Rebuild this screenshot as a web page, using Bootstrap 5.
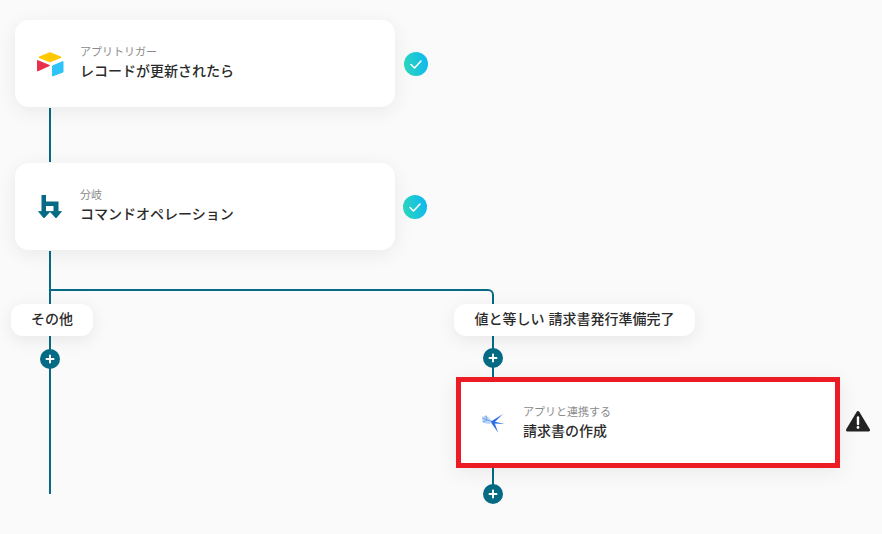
<!DOCTYPE html>
<html lang="ja">
<head>
    <meta charset="UTF-8">
    <meta name="viewport" content="width=device-width, initial-scale=1.0">
    <title>フロー</title>
    <link href="https://cdn.jsdelivr.net/npm/bootstrap@5.3.0/dist/css/bootstrap.min.css" rel="stylesheet">
    <style>
        html, body {
            margin: 0;
            height: 100%;
            overflow: hidden;
            background: #fafafa;
        }
        body {
            font-family: "Liberation Sans", "Noto Sans CJK JP", sans-serif;
            color: #2b2b2b;
        }
        .flow-stage {
            position: relative;
            width: 882px;
            height: 534px;
        }
        /* 接続線 */
        .flow-line {
            position: absolute;
            background: #056a84;
        }
        .flow-corner {
            position: absolute;
            left: 484px;
            top: 289px;
            width: 10px;
            height: 16px;
            border-top: 2px solid #056a84;
            border-right: 2px solid #056a84;
            border-top-right-radius: 6px;
        }
        /* ノード */
        .flow-node {
            position: absolute;
            height: 87px;
            background: #fff;
            border: 0;
            border-radius: 14px;
            box-shadow: 0 4px 20px rgba(0, 0, 0, .07);
        }
        .flow-node-alert {
            left: 456px;
            top: 377px;
            width: 384px;
            height: 91px;
            border: 5px solid #ed1c24;
            border-radius: 0;
        }
        .node-icon {
            width: 65px;
            flex: 0 0 65px;
            display: flex;
            justify-content: center;
            padding-left: 5px;
        }
        .flow-node-alert .node-icon {
            width: 62px;
            flex: 0 0 62px;
            padding-left: 2px;
        }
        .node-text {
            padding-bottom: 2px;
        }
        .flow-node-alert .node-text {
            padding-bottom: 0;
        }
        .node-label {
            font-size: 11px;
            line-height: 16px;
            color: #8a8a8a;
        }
        .node-title {
            font-size: 14px;
            line-height: 20px;
            margin-top: 1px;
            font-weight: 500;
            color: #2b2b2b;
        }
        /* 分岐ラベル */
        .flow-pill {
            position: absolute;
            top: 304px;
            height: 32px;
            background: #fff;
            border-radius: 12px;
            padding-bottom: 2px;
            font-size: 14px;
            font-weight: 500;
            box-shadow: 0 4px 18px rgba(0, 0, 0, .08);
        }
        /* 追加ボタン */
        .flow-plus {
            position: absolute;
            width: 20px;
            height: 20px;
            background: #056a84;
        }
        .flow-status {
            position: absolute;
        }
    </style>
</head>
<body>
    <div class="flow-stage">
        <!-- 接続線 -->
        <div class="flow-line" style="left:49px;top:108px;width:2px;height:54px"></div>
        <div class="flow-line" style="left:49px;top:251px;width:2px;height:243px"></div>
        <div class="flow-line" style="left:50px;top:289px;width:435px;height:2px"></div>
        <div class="flow-corner"></div>
        <div class="flow-line" style="left:492px;top:336px;width:2px;height:41px"></div>
        <div class="flow-line" style="left:492px;top:468px;width:2px;height:17px"></div>

        <!-- トリガー -->
        <div class="card flow-node d-flex flex-row align-items-center" style="left:15px;top:20px;width:380px">
            <div class="node-icon">
                <svg width="30" height="26" viewBox="0 0 30 26">
                    <path d="M15 2 25.500 6.300 15 10.500 4.500 6.300z" fill="#ffc800" stroke="#ffc800" stroke-width="1.500" stroke-linejoin="round"/>
                    <path d="M2.500 9.500 14.500 14.500 2.500 20z" fill="#e8304c" stroke="#e8304c" stroke-width="1" stroke-linejoin="round"/>
                    <path d="M17.500 15 28 10.500V21L17.500 25z" fill="#2fc3f8" stroke="#2fc3f8" stroke-width="1" stroke-linejoin="round"/>
                </svg>
            </div>
            <div class="node-text">
                <div class="node-label">アプリトリガー</div>
                <div class="node-title">レコードが更新されたら</div>
            </div>
        </div>
        <svg class="flow-status" style="left:404px;top:52px" width="24" height="24" viewBox="0 0 24 24">
            <defs>
                <linearGradient id="okGrad" x1="0" y1="0.600" x2="1" y2="0.400">
                    <stop offset="0" stop-color="#2bd6bb"/>
                    <stop offset="1" stop-color="#0fb8f0"/>
                </linearGradient>
            </defs>
            <circle cx="12" cy="12" r="12" fill="url(#okGrad)"/>
            <path d="M7 12.500l3.500 3.500 6.500-7" fill="none" stroke="#fff" stroke-width="1.600" stroke-linecap="round" stroke-linejoin="round"/>
        </svg>

        <!-- 分岐 -->
        <div class="card flow-node d-flex flex-row align-items-center" style="left:15px;top:163px;width:380px">
            <div class="node-icon">
                <svg width="24" height="25" viewBox="0 0 24 25">
                    <path d="M3.500 1h4.500v6.500h12.500v10h-5v-5.500H8v6H3.500z" fill="#056a84"/>
                    <path d="M.5 17.500h11.500l-6 6.500zM12 17.500h11.500l-5.500 6.500z" fill="#056a84" stroke="#056a84" stroke-width=".8" stroke-linejoin="round"/>
                </svg>
            </div>
            <div class="node-text">
                <div class="node-label">分岐</div>
                <div class="node-title">コマンドオペレーション</div>
            </div>
        </div>
        <svg class="flow-status" style="left:403px;top:195px" width="24" height="24" viewBox="0 0 24 24">
            <circle cx="12" cy="12" r="12" fill="url(#okGrad)"/>
            <path d="M7 12.500l3.500 3.500 6.500-7" fill="none" stroke="#fff" stroke-width="1.600" stroke-linecap="round" stroke-linejoin="round"/>
        </svg>

        <!-- 分岐ラベル -->
        <div class="flow-pill d-flex align-items-center justify-content-center" style="left:11px;width:82px">その他</div>
        <div class="flow-pill d-flex align-items-center justify-content-center" style="left:454px;width:241px">値と等しい 請求書発行準備完了</div>

        <!-- 追加ボタン -->
        <div class="flow-plus rounded-circle d-flex align-items-center justify-content-center" style="left:40px;top:349px">
            <svg width="10" height="10" viewBox="0 0 10 10"><path d="M5 1.500v7M1.500 5h7" stroke="#fff" stroke-width="2" stroke-linecap="round"/></svg>
        </div>
        <div class="flow-plus rounded-circle d-flex align-items-center justify-content-center" style="left:483px;top:348px">
            <svg width="10" height="10" viewBox="0 0 10 10"><path d="M5 1.500v7M1.500 5h7" stroke="#fff" stroke-width="2" stroke-linecap="round"/></svg>
        </div>
        <div class="flow-plus rounded-circle d-flex align-items-center justify-content-center" style="left:483px;top:484px">
            <svg width="10" height="10" viewBox="0 0 10 10"><path d="M5 1.500v7M1.500 5h7" stroke="#fff" stroke-width="2" stroke-linecap="round"/></svg>
        </div>

        <!-- アプリ連携 -->
        <div class="card flow-node flow-node-alert d-flex flex-row align-items-center">
            <div class="node-icon">
                <svg width="24" height="22" viewBox="0 0 24 22">
                    <path d="M1 5l3.500-1.500 2.500 1.500 4 4-2 3-4-.5-3.500-1z" fill="#bcd4f8"/>
                    <path d="M1.500 6l4.500 2M2 10l4-2M5 3.500l1 4.500M6 8l5 1.500" stroke="#5f95ee" stroke-width=".8" fill="none"/>
                    <path d="M10 9.500 22 2 14 9.800l9.500 2.200-9.700-.6 3.400 9.300-6.500-9.200z" fill="#2a6de6"/>
                </svg>
            </div>
            <div class="node-text">
                <div class="node-label">アプリと連携する</div>
                <div class="node-title">請求書の作成</div>
            </div>
        </div>
        <svg class="flow-status" style="left:846px;top:410px" width="24" height="22" viewBox="0 0 24 22">
            <path d="M12 2.500 22.500 20H1.500z" fill="#222" stroke="#222" stroke-width="3" stroke-linejoin="round"/>
            <path d="M12 7.500v6.500" stroke="#fff" stroke-width="2.400" stroke-linecap="round"/>
            <circle cx="12" cy="17.500" r="1.400" fill="#fff"/>
        </svg>
    </div>
    <script src="https://cdn.jsdelivr.net/npm/bootstrap@5.3.0/dist/js/bootstrap.bundle.min.js"></script>
</body>
</html>
